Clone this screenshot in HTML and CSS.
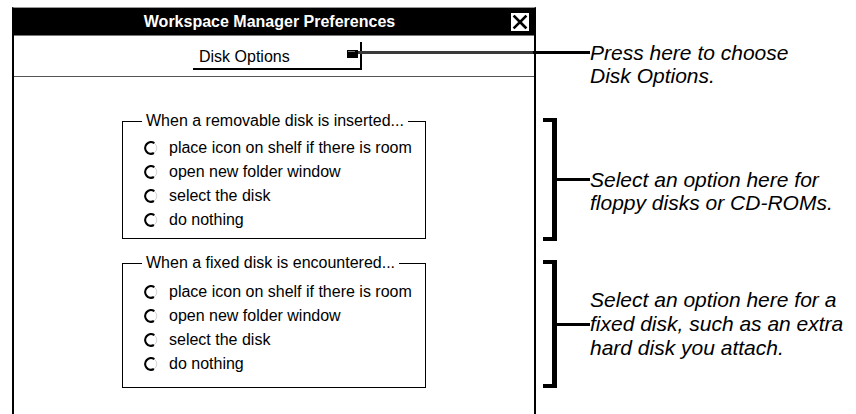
FILE: index.html
```html
<!DOCTYPE html>
<html lang="en">
<head>
<meta charset="utf-8">
<title>Workspace Manager Preferences</title>
<link rel="stylesheet" href="styles.css">
</head>
<body>
<div class="page">
  <div class="window">
    <div class="titlebar">
      <span class="title">Workspace Manager Preferences</span>
      <span class="close">
        <svg width="18" height="18" viewBox="0 0 18 18"><rect x="0" y="0" width="18" height="18" fill="#fff"/><path d="M3.5 3.5 L14.5 14.5 M14.5 3.5 L3.5 14.5" stroke="#000" stroke-width="2.6" stroke-linecap="square"/></svg>
      </span>
    </div>
    <div class="optbar">
      <div class="optbtn">
        <span>Disk Options</span>
        <svg class="cascade" width="11" height="8" viewBox="0 0 11 8"><rect x="0" y="0" width="11" height="8" fill="#000"/><rect x="1" y="1" width="7" height="1" fill="#777"/></svg>
      </div>
    </div>
    <div class="content">
      <fieldset class="group">
        <legend>When a removable disk is inserted...</legend>
        <ul class="options">
          <li><svg class="radio" width="14" height="14" viewBox="0 0 14 14"><circle cx="7" cy="7" r="5.8" fill="none" stroke="#d4d4d4" stroke-width="1"/><path d="M10.3 2.2 A5.8 5.8 0 1 0 9.9 12" fill="none" stroke="#000" stroke-width="2.2"/></svg>place icon on shelf if there is room</li>
          <li><svg class="radio" width="14" height="14" viewBox="0 0 14 14"><circle cx="7" cy="7" r="5.8" fill="none" stroke="#d4d4d4" stroke-width="1"/><path d="M10.3 2.2 A5.8 5.8 0 1 0 9.9 12" fill="none" stroke="#000" stroke-width="2.2"/></svg>open new folder window</li>
          <li><svg class="radio" width="14" height="14" viewBox="0 0 14 14"><circle cx="7" cy="7" r="5.8" fill="none" stroke="#d4d4d4" stroke-width="1"/><path d="M10.3 2.2 A5.8 5.8 0 1 0 9.9 12" fill="none" stroke="#000" stroke-width="2.2"/></svg>select the disk</li>
          <li><svg class="radio" width="14" height="14" viewBox="0 0 14 14"><circle cx="7" cy="7" r="5.8" fill="none" stroke="#d4d4d4" stroke-width="1"/><path d="M10.3 2.2 A5.8 5.8 0 1 0 9.9 12" fill="none" stroke="#000" stroke-width="2.2"/></svg>do nothing</li>
        </ul>
      </fieldset>
      <fieldset class="group group--fixed">
        <legend>When a fixed disk is encountered...</legend>
        <ul class="options">
          <li><svg class="radio" width="14" height="14" viewBox="0 0 14 14"><circle cx="7" cy="7" r="5.8" fill="none" stroke="#d4d4d4" stroke-width="1"/><path d="M10.3 2.2 A5.8 5.8 0 1 0 9.9 12" fill="none" stroke="#000" stroke-width="2.2"/></svg>place icon on shelf if there is room</li>
          <li><svg class="radio" width="14" height="14" viewBox="0 0 14 14"><circle cx="7" cy="7" r="5.8" fill="none" stroke="#d4d4d4" stroke-width="1"/><path d="M10.3 2.2 A5.8 5.8 0 1 0 9.9 12" fill="none" stroke="#000" stroke-width="2.2"/></svg>open new folder window</li>
          <li><svg class="radio" width="14" height="14" viewBox="0 0 14 14"><circle cx="7" cy="7" r="5.8" fill="none" stroke="#d4d4d4" stroke-width="1"/><path d="M10.3 2.2 A5.8 5.8 0 1 0 9.9 12" fill="none" stroke="#000" stroke-width="2.2"/></svg>select the disk</li>
          <li><svg class="radio" width="14" height="14" viewBox="0 0 14 14"><circle cx="7" cy="7" r="5.8" fill="none" stroke="#d4d4d4" stroke-width="1"/><path d="M10.3 2.2 A5.8 5.8 0 1 0 9.9 12" fill="none" stroke="#000" stroke-width="2.2"/></svg>do nothing</li>
        </ul>
      </fieldset>
    </div>
  </div>
  <div class="notes">
    <p class="note note--top">Press here to choose<br>Disk Options.</p>
    <div class="callout callout--removable">
      <div class="bracket"></div>
      <div class="leader"></div>
      <p class="note">Select an option here for<br>floppy disks or CD-ROMs.</p>
    </div>
    <div class="callout callout--fixed">
      <div class="bracket"></div>
      <div class="leader"></div>
      <p class="note">Select an option here for a<br>fixed disk, such as an extra<br>hard disk you attach.</p>
    </div>
  </div>
</div>
</body>
</html>
```
FILE: styles.css
```css
* { box-sizing: border-box; }

body {
  margin: 0;
  background: #fff;
  color: #000;
  font-family: "Liberation Sans", Arial, sans-serif;
}

.page {
  display: flex;
  align-items: flex-start;
  height: 414px;
  overflow: hidden;
  padding: 7px 0 0 12px;
}

.window {
  flex: none;
  width: 524px;
  height: 407px;
  border-top: 1px solid #999;
  border-left: 2px solid #000;
  border-right: 2px solid #000;
}

.titlebar {
  height: 28px;
  background: #000;
  border-bottom: 1px solid #777;
  display: flex;
  align-items: center;
}

.title {
  flex: 1;
  text-align: center;
  padding-left: 14px;
  color: #fff;
  font-weight: bold;
  font-size: 16px;
}

.close {
  display: flex;
  width: 18px;
  height: 18px;
  margin-right: 5px;
}

.optbar {
  height: 41px;
  border-bottom: 1px solid #555;
  padding: 6px 0 0 179px;
}

.optbtn {
  width: 169px;
  height: 28px;
  border-right: 2px solid #000;
  border-bottom: 2px solid #000;
  display: flex;
  align-items: center;
  justify-content: space-between;
  padding: 3px 2px 0 6px;
  font-size: 16px;
}

.cascade {
  align-self: flex-start;
  margin-top: 5px;
}

.content {
  padding: 35px 0 0 108px;
}

.group {
  margin: 0;
  width: 304px;
  border: 1px solid #000;
  padding: 0 0 6px 21px;
}

.group legend {
  margin-left: -2px;
  padding: 0 4px;
  font-size: 16px;
  line-height: 18px;
}

.group--fixed {
  margin-top: 15px;
  padding-bottom: 11px;
}

.options {
  list-style: none;
  margin: 6px 0 0;
  padding: 0;
}

.group--fixed .options {
  margin-top: 8px;
}

.options li {
  display: flex;
  align-items: center;
  height: 24px;
  font-size: 16px;
  white-space: nowrap;
}

.radio {
  flex: none;
  margin-right: 11px;
}

.notes {
  flex: none;
  width: 313px;
  margin-left: 7px;
  padding-top: 34px;
}

.note {
  margin: 0;
  font-style: italic;
  font-size: 21px;
  line-height: 23px;
  white-space: nowrap;
}

.callout--fixed .note {
  line-height: 24px;
}

.note--top {
  position: relative;
  margin-left: 47px;
}

.note--top::before {
  content: "";
  position: absolute;
  right: 100%;
  top: 10px;
  width: 232px;
  height: 3px;
  background: linear-gradient(to right, #3a3a3a 0 175px, #000 175px);
}

.callout {
  display: flex;
  align-items: center;
}

.callout--removable {
  margin-top: 31px;
}

.callout--fixed {
  margin-top: 19px;
}

.bracket {
  flex: none;
  width: 14px;
  border-top: 4px solid #000;
  border-right: 5px solid #000;
  border-bottom: 4px solid #000;
}

.callout--removable .bracket {
  height: 123px;
}

.callout--fixed .bracket {
  height: 128px;
}

.leader {
  flex: none;
  width: 33px;
  height: 3px;
  background: #000;
}

.callout--removable .note {
  margin-top: 23px;
}
```
